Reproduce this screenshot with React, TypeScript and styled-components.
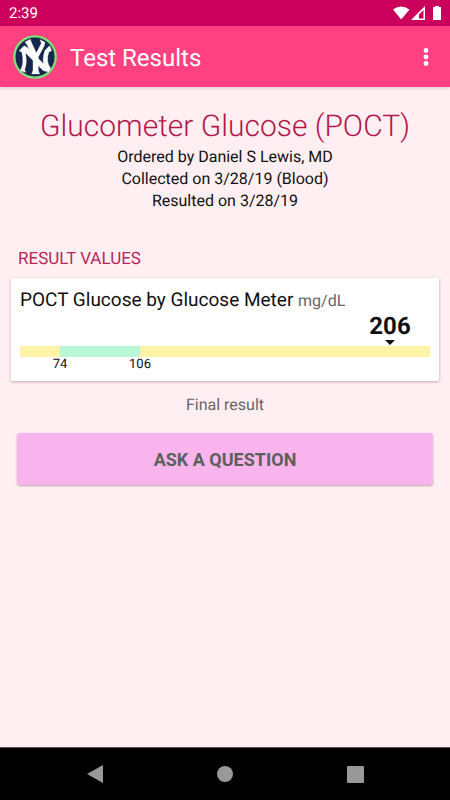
import React from 'react';
import styled, { createGlobalStyle } from 'styled-components';

const GlobalStyle = createGlobalStyle`
  * { box-sizing: border-box; }
  body {
    margin: 0;
    background: #ffeff2;
    color: #111;
    font-family: Roboto, "Liberation Sans", sans-serif;
    text-rendering: geometricPrecision;
  }
  h1, h2, h3, p { margin: 0; font-weight: 400; }
  button { font: inherit; border: 0; padding: 0; cursor: pointer; }
`;

const Screen = styled.div`
  display: flex;
  flex-direction: column;
  min-height: 100vh;
`;

const StatusBar = styled.div`
  display: flex;
  align-items: center;
  justify-content: space-between;
  height: 26px;
  padding: 0 8px 0 9px;
  background: #cb005c;
  color: #fff;
  font-size: 15px;
`;

const StatusIcons = styled.svg`
  display: block;
  width: 49px;
  height: 16px;
`;

const AppBar = styled.header`
  display: flex;
  align-items: center;
  height: 61px;
  padding: 0 12px 0 13px;
  background: #ff4081;
  color: #fff;
  box-shadow: 0 1px 3px rgba(0, 0, 0, 0.16);
`;

const Logo = styled.svg`
  width: 44px;
  height: 44px;
`;

const AppTitle = styled.h1`
  flex: 1;
  margin-left: 13px;
  padding-top: 2px;
  font-size: 24px;
  line-height: 30px;
`;

const MenuButton = styled.button`
  display: flex;
  justify-content: center;
  align-items: center;
  width: 24px;
  height: 32px;
  background: none;
  color: #fff;
`;

const Content = styled.main`
  flex: 1;
  display: flex;
  flex-direction: column;
  padding: 20px 11px;
`;

const Summary = styled.section`
  text-align: center;
  font-size: 16px;
  line-height: 22px;
`;

const TestName = styled.h2`
  color: #b3164c;
  font-size: 30px;
  font-weight: 300;
  line-height: 39px;
`;

const SectionTitle = styled.h3`
  margin: 36px 7px 8px;
  color: #b7285a;
  font-size: 17px;
  line-height: 22px;
`;

const Card = styled.section`
  padding: 10px 9px 8px;
  background: #fff;
  border-radius: 1px;
  box-shadow: 0 1px 3px rgba(80, 30, 50, 0.35);
`;

const ComponentName = styled.p`
  font-size: 19px;
  line-height: 24px;
`;

const Unit = styled.span`
  color: #666;
  font-size: 16px;
`;

const ScaleRow = styled.div`
  display: flex;
`;

const Segment = styled.div<{ $span: number; $color?: string }>`
  flex: ${(p) => p.$span} 1 0;
  min-width: 0;
  height: ${(p) => (p.$color ? '11px' : 'auto')};
  background: ${(p) => p.$color ?? 'none'};
`;

const Anchor = styled.div`
  display: flex;
  flex-direction: column;
  align-items: center;
  width: 0;
`;

const Reading = styled.strong`
  font-size: 24px;
  line-height: 27px;
  font-weight: 700;
`;

const Pointer = styled.svg`
  flex: none;
  width: 10px;
  height: 5px;
  margin-bottom: 1px;
`;

const Bound = styled.span`
  font-size: 13px;
  line-height: 16px;
`;

const Status = styled.p`
  margin: 13px 0 17px;
  color: #666;
  text-align: center;
  font-size: 16px;
  line-height: 22px;
`;

const AskButton = styled.button`
  height: 52px;
  margin: 0 6px;
  border-radius: 3px;
  background: #f9b4ee;
  color: #5b605b;
  font-size: 18px;
  font-weight: 700;
  box-shadow: 0 1px 2px rgba(80, 60, 70, 0.4);
`;

const NavBar = styled.nav`
  display: flex;
  align-items: center;
  justify-content: space-between;
  height: 53px;
  padding: 0 77px;
  background: #000;
  border-top: 1px solid #555;
`;

const NavButton = styled.button`
  display: flex;
  align-items: center;
  justify-content: center;
  width: 36px;
  height: 36px;
  background: none;
  color: #999;
`;

const scale = { min: 58, low: 74, high: 106, max: 222 };
const reading = 206;

export default function App() {
  return (
    <Screen>
      <GlobalStyle />
      <StatusBar>
        <span>2:39</span>
        <StatusIcons viewBox="0 0 49 16" fill="#fff" aria-hidden="true">
          <path d="M0 4.500Q8 -1.500 16.500 4.500L8.200 14.500Z" />
          <path fillRule="evenodd" d="M32 1V15H18ZM30.500 5L26 9.500V13.500H30.500Z" />
          <path d="M40 2H42V1H46V2H48V15H40Z" />
        </StatusIcons>
      </StatusBar>
      <AppBar>
        <Logo viewBox="0 0 132 132" role="img" aria-label="NY">
          <circle cx="66" cy="66" r="62" fill="#14264b" stroke="#7edc79" strokeWidth="7" />
          <g fill="#fff" stroke="#fff" strokeWidth="1">
            <path d="M18 48L33 32L42 37L99 94L109 97L104 110L91 107L37 53Q44 81 35 104L38 112L22 107Q35 82 26 50Z" />
            <path d="M36 21L52 13L56 24L70 54L85 25L81 14L96 22L94 32L76 66V106L80 117H56L60 106V69L43 31Z" />
            <path d="M110 32L96 46Q84 77 97 103L107 110L113 99Q97 79 108 50L116 47Z" />
          </g>
        </Logo>
        <AppTitle>Test Results</AppTitle>
        <MenuButton aria-label="More options">
          <svg width="6" height="20" viewBox="0 0 6 20" fill="currentColor">
            <circle cx="3" cy="3.500" r="2.400" />
            <circle cx="3" cy="10" r="2.400" />
            <circle cx="3" cy="16.500" r="2.400" />
          </svg>
        </MenuButton>
      </AppBar>
      <Content>
        <Summary>
          <TestName>Glucometer Glucose (POCT)</TestName>
          <p>Ordered by Daniel S Lewis, MD</p>
          <p>Collected on 3/28/19 (Blood)</p>
          <p>Resulted on 3/28/19</p>
        </Summary>
        <SectionTitle>RESULT VALUES</SectionTitle>
        <Card>
          <ComponentName>
            POCT Glucose by Glucose Meter <Unit>mg/dL</Unit>
          </ComponentName>
          <ScaleRow>
            <Segment $span={reading - scale.min} />
            <Anchor>
              <Reading>{reading}</Reading>
              <Pointer viewBox="0 0 10 5">
                <path d="M0 0H10L5 5Z" fill="#111" />
              </Pointer>
            </Anchor>
            <Segment $span={scale.max - reading} />
          </ScaleRow>
          <ScaleRow>
            <Segment $span={scale.low - scale.min} $color="#fff3a8" />
            <Segment $span={scale.high - scale.low} $color="#b9f6d8" />
            <Segment $span={scale.max - scale.high} $color="#fff3a8" />
          </ScaleRow>
          <ScaleRow>
            <Segment $span={scale.low - scale.min} />
            <Anchor>
              <Bound>{scale.low}</Bound>
            </Anchor>
            <Segment $span={scale.high - scale.low} />
            <Anchor>
              <Bound>{scale.high}</Bound>
            </Anchor>
            <Segment $span={scale.max - scale.high} />
          </ScaleRow>
        </Card>
        <Status>Final result</Status>
        <AskButton>ASK A QUESTION</AskButton>
      </Content>
      <NavBar>
        <NavButton aria-label="Back">
          <svg width="16" height="18" viewBox="0 0 16 18" fill="currentColor">
            <path d="M16 0V18L0 9Z" />
          </svg>
        </NavButton>
        <NavButton aria-label="Home">
          <svg width="16" height="16" viewBox="0 0 16 16" fill="currentColor">
            <circle cx="8" cy="8" r="8" />
          </svg>
        </NavButton>
        <NavButton aria-label="Recent apps">
          <svg width="17" height="17" viewBox="0 0 17 17" fill="currentColor">
            <rect width="17" height="17" rx="1" />
          </svg>
        </NavButton>
      </NavBar>
    </Screen>
  );
}
